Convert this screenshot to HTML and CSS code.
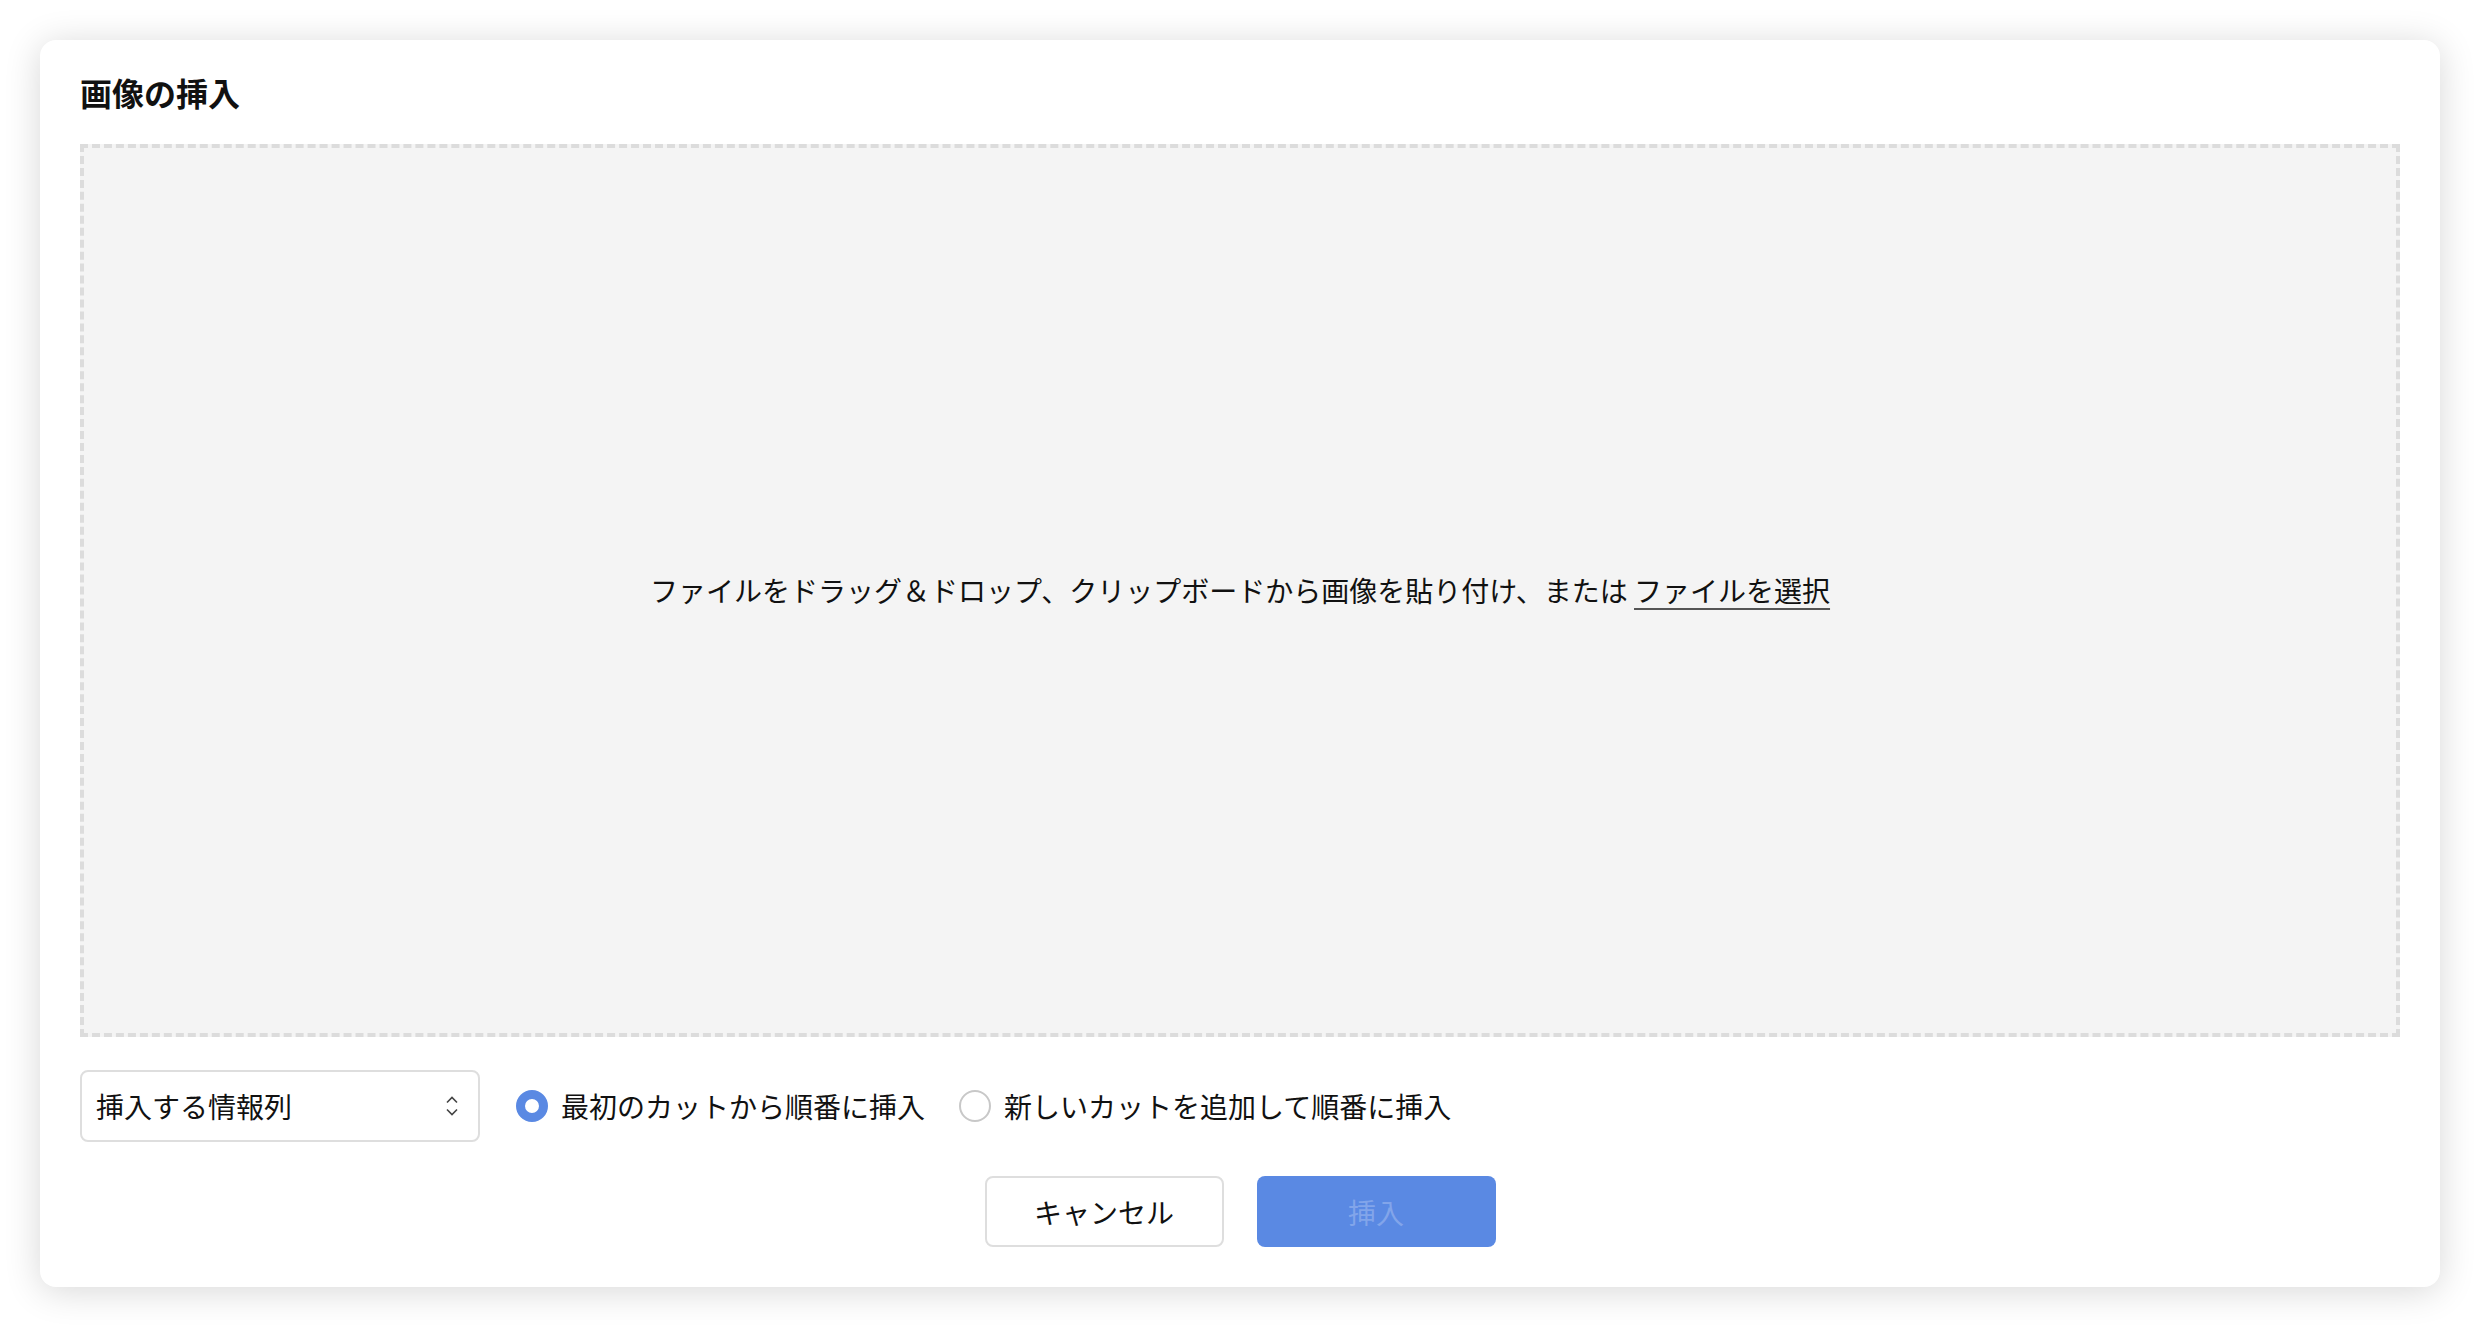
FILE: index.html
```html
<!DOCTYPE html>
<html lang="ja">
<head>
  <meta charset="UTF-8">
  <title>画像の挿入</title>
  <link rel="stylesheet" href="styles.css">
</head>
<body>

  <!-- 画像挿入ダイアログ -->
  <div class="dialog">
    <h2 class="dialog-title">画像の挿入</h2>

    <!-- ドロップエリア -->
    <div class="drop-zone">
      <p>ファイルをドラッグ＆ドロップ、クリップボードから画像を貼り付け、または <a href="#" class="file-link">ファイルを選択</a></p>
    </div>

    <!-- 挿入オプション -->
    <div class="options">
      <div class="select-box">
        <span>挿入する情報列</span>
        <svg class="chevrons" width="12" height="20" viewBox="0 0 12 20">
          <path d="M1 6.5 L6 1.5 L11 6.5" fill="none" stroke="#444" stroke-width="1.6"/>
          <path d="M1 13.5 L6 18.5 L11 13.5" fill="none" stroke="#444" stroke-width="1.6"/>
        </svg>
      </div>
      <label class="radio">
        <span class="radio-mark checked"></span>
        最初のカットから順番に挿入
      </label>
      <label class="radio">
        <span class="radio-mark"></span>
        新しいカットを追加して順番に挿入
      </label>
    </div>

    <!-- ボタン -->
    <div class="actions">
      <button class="btn btn-cancel">キャンセル</button>
      <button class="btn btn-primary" disabled>挿入</button>
    </div>
  </div>

</body>
</html>
```

FILE: styles.css
```css
/* 基本スタイル */
body {
  margin: 0;
  padding: 40px;
  background: #fff;
  font-family: "Noto Sans CJK JP", "Noto Sans", sans-serif;
  color: #111;
}

/* ダイアログ */
.dialog {
  width: 2400px;
  height: 1247px;
  box-sizing: border-box;
  padding: 40px;
  background: #fff;
  border-radius: 16px;
  box-shadow: 0 4px 36px rgba(0, 0, 0, 0.16);
  display: flex;
  flex-direction: column;
}
.dialog-title {
  margin: -4px 0 36px;
  font-size: 32px;
  line-height: 32px;
  font-weight: bold;
}

/* ドロップエリア */
.drop-zone {
  height: 895px;
  box-sizing: border-box;
  background: #f4f4f4;
  border: 4px dashed #dcdcdc;
  display: flex;
  align-items: center;
  justify-content: center;
}
.drop-zone p {
  margin: 0;
  font-size: 28px;
  line-height: 40px;
  transform: translateY(-1px);
}
.file-link {
  color: #111;
  text-decoration: underline;
  text-decoration-color: #555;
  text-underline-offset: 6px;
  text-decoration-thickness: 2px;
}

/* オプション行 */
.options {
  margin-top: 33px;
  display: flex;
  align-items: center;
  gap: 36px;
}
.select-box {
  width: 400px;
  height: 72px;
  box-sizing: border-box;
  border: 2px solid #dedede;
  border-radius: 8px;
  padding: 0 20px 0 14px;
  display: flex;
  align-items: center;
  justify-content: space-between;
  font-size: 28px;
}
.radio {
  display: flex;
  align-items: center;
  gap: 13px;
  font-size: 28px;
  line-height: 40px;
}
.radio + .radio {
  margin-left: -2px;
}
.radio-mark {
  width: 32px;
  height: 32px;
  box-sizing: border-box;
  border-radius: 50%;
  border: 2.5px solid #c8c8c8;
  background: #fff;
}
.radio-mark.checked {
  border: 9.5px solid #5a89e3;
}

/* ボタン */
.actions {
  margin-top: 34px;
  display: flex;
  justify-content: center;
  gap: 33px;
}
.btn {
  width: 239px;
  height: 71px;
  border-radius: 8px;
  font-family: inherit;
  font-size: 28px;
  cursor: pointer;
}
.btn-cancel {
  background: #fff;
  border: 2px solid #dedede;
  color: #111;
}
.btn-primary {
  background: #5a89e3;
  border: none;
  color: #82a5ea;
}
```
